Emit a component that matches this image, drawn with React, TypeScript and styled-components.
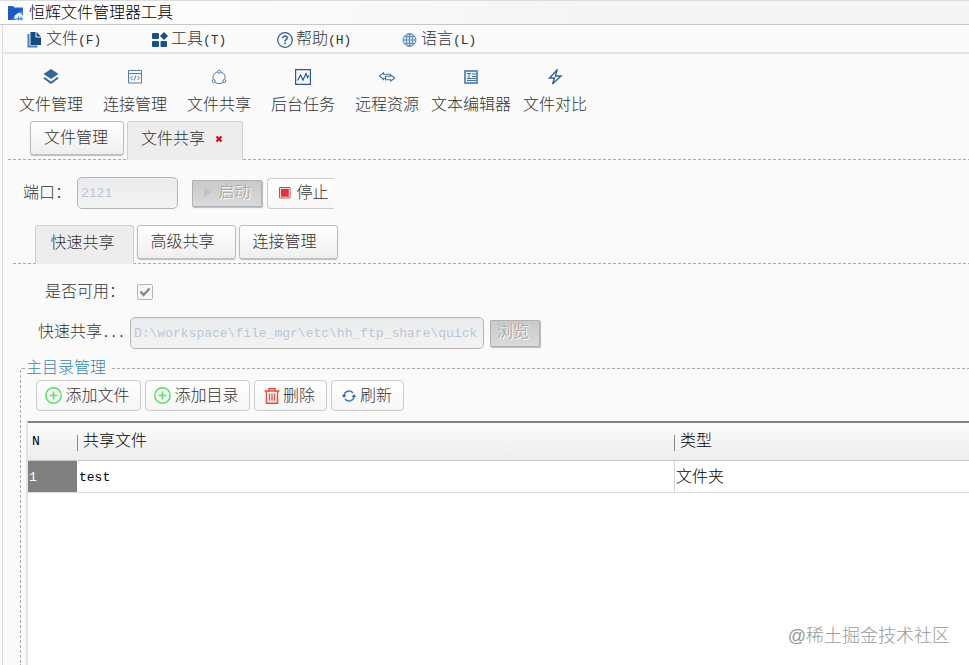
import React, { useState } from "react";
import styled, { createGlobalStyle, css } from "styled-components";

const GlobalStyle = createGlobalStyle`
  * { box-sizing: border-box; }
  body {
    margin: 0;
    background: #fafafa;
    color: #333;
    font-family: "Liberation Sans", "Noto Sans CJK SC", sans-serif;
    font-size: 16px;
    font-weight: 300;
    line-height: 24px;
  }
  button, input { font: inherit; color: inherit; }
`;

const Window = styled.div`
  position: relative;
  display: flex;
  flex-direction: column;
  min-height: 100vh;
  overflow: hidden;
`;

const TitleBar = styled.header`
  display: flex;
  align-items: center;
  gap: 5px;
  height: 25px;
  padding-left: 8px;
  border-top: 1px solid #dcdcdc;
  border-bottom: 1px solid #c8c8c8;
  background: linear-gradient(to right, #ffffff, #f5f5f5 60%);
  color: #000;
`;

const Title = styled.h1`
  margin: 0;
  font-size: 16px;
  font-weight: 300;
  line-height: 22px;
`;

const Body = styled.main`
  flex: 1;
  display: flex;
  flex-direction: column;
  margin-left: 2px;
  border-left: 1px solid #dedede;
`;

const MenuBar = styled.nav`
  display: flex;
  height: 29px;
  padding: 2px 0 0 24px;
  border-bottom: 2px solid #e4e6e6;
`;

const MenuItem = styled.button`
  display: flex;
  align-items: center;
  gap: 3px;
  width: 125px;
  padding: 0;
  border: 0;
  background: none;
  text-align: left;
`;

const Latin = styled.span`
  font-family: "Liberation Mono", monospace;
  font-size: 13px;
`;

const ToolBar = styled.div`
  display: flex;
  height: 67px;
  padding: 15px 0 0 6px;
`;

const ToolItem = styled.button`
  display: flex;
  flex-direction: column;
  align-items: center;
  gap: 8px;
  width: 84px;
  padding: 0;
  border: 0;
  background: none;
  white-space: nowrap;
`;

const TabStrip = styled.div<{ $nested?: boolean }>`
  display: flex;
  gap: 3px;
  height: 39px;
  margin: ${(p) => (p.$nested ? "16px 0 0 10px" : "0 0 0 5px")};
  padding-left: 22px;
  background: repeating-linear-gradient(to right, #aaa 0 3px, transparent 3px 5px) left bottom / 100% 1px no-repeat;
`;

const Tab = styled.button<{ $active?: boolean; $closable?: boolean; $wide?: boolean }>`
  display: flex;
  align-items: center;
  justify-content: center;
  gap: 10px;
  width: ${(p) => (p.$closable ? 116 : p.$wide ? 99 : 94)}px;
  height: 34px;
  padding: 0 ${(p) => (p.$wide ? 8 : 2)}px 0 0;
  border: 1px solid #bdbdbd;
  border-radius: 3px;
  background: linear-gradient(#ffffff, #efefef);
  box-shadow: 0 1px 1px #bbb;
  ${(p) =>
    p.$active &&
    css`
      height: 39px;
      padding: 0 ${p.$closable ? 6 : 4}px 5px 0;
      border-color: #cfcfcf;
      border-bottom: 0;
      border-radius: 3px 3px 0 0;
      background: #ededed;
      box-shadow: none;
    `}
`;

const FormRow = styled.div<{ $indent: number; $top: number }>`
  display: flex;
  align-items: center;
  height: 32px;
  padding-left: ${(p) => p.$indent}px;
  margin-top: ${(p) => p.$top}px;
`;

const Label = styled.label<{ $width: number }>`
  width: ${(p) => p.$width}px;
  flex: none;
  white-space: nowrap;
`;

const TextBox = styled.input<{ $width: number }>`
  width: ${(p) => p.$width}px;
  height: 32px;
  padding: 0 3px;
  border: 1px solid #b5b5b5;
  border-radius: 5px;
  background: linear-gradient(#eaebec, #f3f3f3);
  color: #b9c8d8;
  font-family: "Liberation Mono", monospace;
  font-size: 13px;
`;

const CheckBox = styled.input`
  appearance: none;
  width: 16px;
  height: 16px;
  margin: 0;
  border: 1px solid #b4b4b4;
  border-radius: 2px;
  background: #f7f7f7;
`;

const CheckWrap = styled.span`
  position: relative;
  display: flex;

  svg {
    position: absolute;
    inset: 0;
    pointer-events: none;
  }
`;

const Button = styled.button<{ $width: number; $clipped?: boolean }>`
  display: flex;
  align-items: center;
  justify-content: center;
  gap: 3px;
  width: ${(p) => p.$width}px;
  height: 31px;
  flex: none;
  padding: 0 2px 0 0;
  border: 1px solid #cccccc;
  border-radius: 4px;
  background: linear-gradient(#ffffff, #f6f6f6);
  white-space: nowrap;
  ${(p) =>
    p.$clipped &&
    css`
      padding: 0 0 0 4px;
      border-right: 0;
      border-radius: 4px 0 0 4px;
    `}
  &:disabled {
    height: 27px;
    padding: 0 4px 2px 0;
    border-color: #b0b0b0;
    border-radius: 1px;
    background: linear-gradient(#c9c9c9, #dadada);
    box-shadow: 1px 1px 1px #bbb;
    color: #a3a3a3;
    text-shadow: 1px 1px 0 #fff;
  }
`;

const ButtonGroup = styled.div<{ $gap: number }>`
  display: flex;
  align-items: center;
  gap: ${(p) => p.$gap}px;
`;

const Group = styled.section`
  flex: 1;
  display: flex;
  flex-direction: column;
  min-width: 0;
  margin: 19px 0 0 17px;
  padding-left: 5px;
  border: 1px dashed #aaa;
  border-width: 1px 0 0 1px;
  border-radius: 2px 0 0 0;
`;

const GroupTitle = styled.h2`
  align-self: flex-start;
  margin: -13px 0 0 -1px;
  padding: 0 4px 0 1px;
  background: #fafafa;
  color: #3d87ad;
  font-size: 16px;
  font-weight: 300;
  line-height: 24px;
`;

const Actions = styled.div`
  display: flex;
  gap: 4px;
  padding-left: 10px;
`;

const Grid = styled.div`
  flex: 1;
  margin-top: 10px;
  border-top: 2px solid #848484;
  border-left: 2px solid #e2e2e2;
  border-radius: 3px 0 0 0;
  background: #fff;
  color: #000;
`;

const Table = styled.table`
  width: 100%;
  table-layout: fixed;
  border-collapse: separate;
  border-spacing: 0;
`;

const IndexColumn = styled.col`
  width: 49px;
`;

const FileColumn = styled.col`
  width: 597px;
`;

const HeadRow = styled.tr`
  height: 38px;
  background: linear-gradient(#fbfbfb, #ededed);
`;

const HeadCell = styled.th<{ $first?: boolean }>`
  padding: 0 0 2px ${(p) => (p.$first ? 4 : 6)}px;
  border-bottom: 1px solid #c8c8c8;
  font-weight: 300;
  text-align: left;
  background: ${(p) => (p.$first ? "none" : "linear-gradient(#8a8a8a, #8a8a8a) left 12px / 1px 16px no-repeat")};
`;

const Row = styled.tr`
  height: 32px;
`;

const Cell = styled.td<{ $index?: boolean; $divided?: boolean }>`
  padding: 0 ${(p) => (p.$index || p.$divided ? 1 : 2)}px;
  border-bottom: 1px solid #dcdcdc;
  border-left: ${(p) => (p.$divided ? "1px solid #d4d4d4" : "0")};
  background: ${(p) => (p.$index ? "#808080" : "none")};
  color: ${(p) => (p.$index ? "#fff" : "#000")};
`;

const Watermark = styled.span`
  position: absolute;
  right: 19px;
  bottom: 17px;
  color: #999;
  font-size: 18px;
`;

const Svg = ({ size = 16, children }: { size?: number; children: React.ReactNode }) => (
  <svg width={size} height={size} viewBox="0 0 16 16" fill="none" aria-hidden="true">
    {children}
  </svg>
);

const AppIcon = () => (
  <Svg>
    <path d="M0 1h5l1.5 1.5H15V15H0z" fill="#2463cf" />
    <path d="M0 4h15v11H0z" fill="#3577e4" />
    <path d="M0 4h15L2 15H0z" fill="#2157c5" />
    <path d="M8 14.5a2.6 2.6 0 0 1 .3-5 3.2 3.2 0 0 1 6 .7 2.2 2.2 0 0 1 .2 4.3z" fill="#e9f2ff" />
    <path d="M8.5 13.5h6m-4-2v4m2.5-4v4" stroke="#4b88e8" />
  </Svg>
);

const FilesIcon = () => (
  <Svg>
    <path d="M1.5 2v12.5h9" stroke="#4c7fab" strokeWidth="2" />
    <path d="M3.5 0h6l4.5 4.5V13H3.5z" fill="#164a84" />
    <path d="M9 0v5h5" stroke="#fafafa" strokeWidth="1" />
  </Svg>
);

const ToolsIcon = () => (
  <Svg>
    <g fill="#1b4f8c">
      <rect x="0" y="1" width="7" height="6" rx="1" />
      <rect x="0" y="9" width="7" height="6" rx="1" />
      <rect x="8.5" y="9" width="6.5" height="6" rx="1" />
      <path d="M12 0l4 4-4 4-4-4z" />
    </g>
  </Svg>
);

const HelpIcon = () => (
  <Svg>
    <circle cx="8" cy="8" r="7.3" stroke="#2c568f" strokeWidth="1.2" />
    <path d="M5.8 6.2c.1-3 4.7-2.7 4.4 0C10 7.6 8 7.7 8 9.4" stroke="#2c568f" strokeWidth="1.4" />
    <path d="M8 10.6v1.6" stroke="#2c568f" strokeWidth="1.6" />
  </Svg>
);

const GlobeIcon = () => (
  <Svg>
    <g stroke="#5c8db8">
      <circle cx="7.5" cy="8" r="6.4" fill="#dbe8f2" />
      <ellipse cx="7.5" cy="8" rx="3.2" ry="6.4" />
      <path d="M7.5 1.5v13M1 8h13M2 4.7h11M2 11.3h11" />
    </g>
  </Svg>
);

const LayersIcon = () => (
  <Svg>
    <path d="M8 0l7.5 5L8 10 .5 5z" fill="#33689d" />
    <path d="M1 8.8l7 5 7-5" stroke="#33689d" strokeWidth="2" />
  </Svg>
);

const CodeIcon = () => (
  <Svg>
    <path d="M1.5 1.5h13v12.5h-13zM1.5 4.5h13M5.5 7L3.5 9l2 2m5-4l2 2-2 2M9 6.5l-2 5" stroke="#4c7eab" />
  </Svg>
);

const ShareIcon = () => (
  <Svg>
    <path d="M6 3a6 6 0 0 0-4 7m8-7a6 6 0 0 1 4 7M4 13.5c2.5 1.5 5.5 1.5 8 0" stroke="#4c7eab" />
    <circle cx="8" cy="2.7" r="1.5" stroke="#4c7eab" />
    <circle cx="2.7" cy="12" r="1.5" stroke="#4c7eab" />
    <circle cx="13.3" cy="12" r="1.5" stroke="#4c7eab" />
  </Svg>
);

const ChartIcon = () => (
  <Svg>
    <path d="M.6.6h14.8v14.8H.6z" stroke="#28588f" strokeWidth="1.2" />
    <path d="M2.5 11.5L5.5 6 8 11l3-6.5 1.5 4 1.5-2" stroke="#28588f" strokeWidth="1.2" />
  </Svg>
);

const RemoteIcon = () => (
  <Svg>
    <path
      d="M6 9.5H4.5v1L.6 7l3.9-3.3V5.2h6l1 1.3M6.5 7.2h5.2V5.8L15.6 9l-3.9 3.2v-1.5H6.5z"
      stroke="#4178a7"
      strokeWidth="1.1"
    />
  </Svg>
);

const EditorIcon = () => (
  <Svg>
    <path d="M2 2h12v12H2z" fill="#edf4f9" stroke="#6593bb" strokeWidth="2" />
    <path d="M4 4.5h4M6 4.5V9M9 5h4M9 7.5h4M4 9.5h9M4 11.5h9" stroke="#41739f" />
  </Svg>
);

const BoltIcon = () => (
  <Svg>
    <path d="M10 1L2.5 9h5L5.5 15 14 7H8.5z" stroke="#2f629b" strokeWidth="1.4" />
  </Svg>
);

const CloseIcon = () => (
  <svg width="8" height="8" viewBox="0 0 8 8" aria-hidden="true">
    <path d="M1.5 1.5l5 5m0-5l-5 5" stroke="#e30613" strokeWidth="2.2" />
  </svg>
);

const PlayIcon = () => (
  <Svg>
    <path d="M5 3l7 5-7 5z" fill="#c2c2c2" />
  </Svg>
);

const StopIcon = () => (
  <Svg>
    <path d="M2.5 2.5h10.5v10.5h-10.5z" fill="#fff" stroke="#b85454" />
    <path d="M3.8 3.8h8v8h-8z" fill="#e62e38" />
  </Svg>
);

const CheckIcon = () => (
  <Svg>
    <path d="M3.5 7.5L6.5 11 12.5 4.5" stroke="#8a8a8a" strokeWidth="2.4" />
  </Svg>
);

const AddIcon = () => (
  <Svg size={17}>
    <circle cx="8" cy="8" r="7.2" stroke="#4ee35c" strokeWidth="1.4" />
    <path d="M8 4.2v7.6M4.2 8h7.6" stroke="#5ade66" strokeWidth="1.6" />
  </Svg>
);

const TrashIcon = () => (
  <Svg>
    <path d="M.5 3h15M5 3V.8h6V3M2.5 3v12.2h11V3" stroke="#e0503f" strokeWidth="1.5" />
    <path d="M5.5 5.5v7.2M8 5.5v7.2M10.5 5.5v7.2" stroke="#e0503f" strokeWidth="1.3" />
  </Svg>
);

const RefreshIcon = () => (
  <Svg>
    <path d="M3 7.5a5 5 0 0 1 9-2.5M13 8.5a5 5 0 0 1-9 2.5" stroke="#477bab" strokeWidth="1.5" />
    <path d="M.8 7h4.6L3 10zM10.6 9h4.6L13 6z" fill="#33689d" />
  </Svg>
);

const menus = [
  { label: "文件", key: "(F)", icon: <FilesIcon /> },
  { label: "工具", key: "(T)", icon: <ToolsIcon /> },
  { label: "帮助", key: "(H)", icon: <HelpIcon /> },
  { label: "语言", key: "(L)", icon: <GlobeIcon /> },
];

const tools = [
  { label: "文件管理", icon: <LayersIcon /> },
  { label: "连接管理", icon: <CodeIcon /> },
  { label: "文件共享", icon: <ShareIcon /> },
  { label: "后台任务", icon: <ChartIcon /> },
  { label: "远程资源", icon: <RemoteIcon /> },
  { label: "文本编辑器", icon: <EditorIcon /> },
  { label: "文件对比", icon: <BoltIcon /> },
];

const shareTabs = ["快速共享", "高级共享", "连接管理"];

const actions = [
  { label: "添加文件", icon: <AddIcon />, width: 105 },
  { label: "添加目录", icon: <AddIcon />, width: 105 },
  { label: "删除", icon: <TrashIcon />, width: 73 },
  { label: "刷新", icon: <RefreshIcon />, width: 73 },
];

function ShareTabs({ value, onChange }: { value: number; onChange: (i: number) => void }) {
  return (
    <TabStrip $nested role="tablist">
      {shareTabs.map((label, i) => (
        <Tab
          key={label}
          type="button"
          role="tab"
          aria-selected={i === value}
          $wide
          $active={i === value}
          onClick={() => onChange(i)}
        >
          {label}
        </Tab>
      ))}
    </TabStrip>
  );
}

export default function App() {
  const [shareTab, setShareTab] = useState(0);

  return (
    <>
      <GlobalStyle />
      <Window>
        <TitleBar>
          <AppIcon />
          <Title>恒辉文件管理器工具</Title>
        </TitleBar>
        <Body>
          <MenuBar>
            {menus.map((m) => (
              <MenuItem key={m.label} type="button">
                {m.icon}
                <span>
                  {m.label}
                  <Latin>{m.key}</Latin>
                </span>
              </MenuItem>
            ))}
          </MenuBar>
          <ToolBar>
            {tools.map((t) => (
              <ToolItem key={t.label} type="button">
                {t.icon}
                {t.label}
              </ToolItem>
            ))}
          </ToolBar>
          <TabStrip role="tablist">
            <Tab type="button" role="tab" aria-selected={false}>
              文件管理
            </Tab>
            <Tab type="button" role="tab" aria-selected $active $closable>
              文件共享
              <CloseIcon />
            </Tab>
          </TabStrip>

          <FormRow $indent={20} $top={17}>
            <Label htmlFor="port" $width={54}>
              端口：
            </Label>
            <ButtonGroup $gap={14}>
              <TextBox id="port" $width={101} defaultValue="2121" disabled />
              <ButtonGroup $gap={5}>
                <Button type="button" $width={70} disabled>
                  <PlayIcon />
                  启动
                </Button>
                <Button type="button" $width={67} $clipped>
                  <StopIcon />
                  停止
                </Button>
              </ButtonGroup>
            </ButtonGroup>
          </FormRow>

          <ShareTabs value={shareTab} onChange={setShareTab} />

          <FormRow $indent={42} $top={12}>
            <Label htmlFor="enabled" $width={92}>
              是否可用：
            </Label>
            <CheckWrap>
              <CheckBox id="enabled" type="checkbox" defaultChecked disabled />
              <CheckIcon />
            </CheckWrap>
          </FormRow>

          <FormRow $indent={35} $top={9}>
            <Label htmlFor="path" $width={92}>
              快速共享<Latin>...</Latin>
            </Label>
            <ButtonGroup $gap={6}>
              <TextBox
                id="path"
                $width={354}
                defaultValue="D:\workspace\file_mgr\etc\hh_ftp_share\quick"
                disabled
              />
              <Button type="button" $width={50} disabled>
                浏览
              </Button>
            </ButtonGroup>
          </FormRow>

          <Group aria-labelledby="group-title">
            <GroupTitle id="group-title">主目录管理</GroupTitle>
            <Actions>
              {actions.map((a) => (
                <Button key={a.label} type="button" $width={a.width}>
                  {a.icon}
                  {a.label}
                </Button>
              ))}
            </Actions>
            <Grid>
              <Table>
                <colgroup>
                  <IndexColumn />
                  <FileColumn />
                  <col />
                </colgroup>
                <thead>
                  <HeadRow>
                    <HeadCell $first>
                      <Latin>N</Latin>
                    </HeadCell>
                    <HeadCell>共享文件</HeadCell>
                    <HeadCell>类型</HeadCell>
                  </HeadRow>
                </thead>
                <tbody>
                  <Row>
                    <Cell $index>
                      <Latin>1</Latin>
                    </Cell>
                    <Cell>
                      <Latin>test</Latin>
                    </Cell>
                    <Cell $divided>文件夹</Cell>
                  </Row>
                </tbody>
              </Table>
            </Grid>
          </Group>
        </Body>
        <Watermark>@稀土掘金技术社区</Watermark>
      </Window>
    </>
  );
}
